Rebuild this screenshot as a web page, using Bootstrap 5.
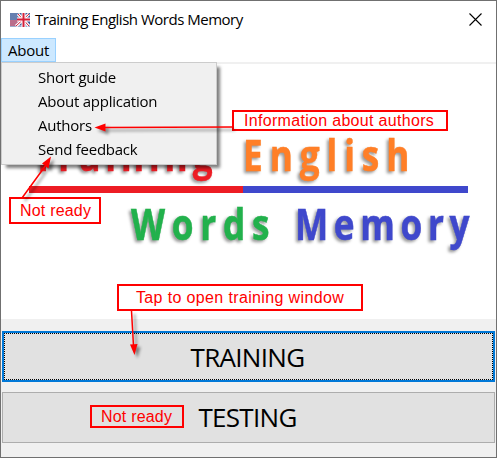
<!DOCTYPE html>
<html lang="en">
<head>
<meta charset="utf-8">
<meta name="viewport" content="width=device-width, initial-scale=1">
<title>Training English Words Memory</title>
<link href="https://cdn.jsdelivr.net/npm/bootstrap@5.3.0/dist/css/bootstrap.min.css" rel="stylesheet">
<style>
body { font-family: "Open Sans", "Noto Sans", sans-serif; font-size: 15px; color: #000; overflow: hidden; }
.app-window { width: 497px; height: 458px; border: 1px solid #707070; background: #f0f0f0; }
.titlebar { height: 37px; padding: 0 14px 0 9px; }
.title-text { margin-left: 5px; letter-spacing: -.49px; line-height: 37px; }
.menubar { height: 24px; }
.menu-open { width: 55px; height: 24px; line-height: 22px; background: #cce8ff; border: 1px solid #99d1ff; padding: 0 0 0 6px; letter-spacing: -.2px; }
.canvas-area { height: 257px; border-top: 2px solid #f0f0f0; }
.popup-menu { left: 0; top: 61px; width: 216px; height: 103px; background: #f0f0f0; border: 1px solid #ccc; box-shadow: 4px 4px 3px -1px rgba(0,0,0,.5); padding: 2px 0 0 36px; }
.popup-menu li { height: 24px; line-height: 24px; letter-spacing: -.24px; }
.win-btn { height: 51px; margin: 0 1px; background: #e1e1e1; border: 1px solid #adadad; font: 26px/49px "Open Sans", sans-serif; letter-spacing: -.7px; color: #000; padding: 0 2px 0 0; border-radius: 0; }
.win-btn.focused { border: 2px solid #0078d7; line-height: 47px; padding: 0; }
.focused .focus-dots { border: 1px dotted #000; height: 47px; padding-right: 2px; }
.button-stack { padding-top: 12px; gap: 10px; }
.note { border: 2px solid #f00; color: #f00; background: #fff; font: 16px "Liberation Sans", Arial, sans-serif; white-space: nowrap; }
.note-authors { left: 231px; top: 109px; width: 216px; height: 21px; line-height: 18px; padding-left: 10px; letter-spacing: .31px; }
.note-feedback { left: 8px; top: 196px; width: 92px; height: 27px; line-height: 23px; padding-left: 9px; letter-spacing: .2px; }
.note-training { left: 116px; top: 283px; width: 246px; height: 27px; line-height: 23px; padding-left: 17px; letter-spacing: .36px; }
.note-testing { left: 89px; top: 404px; width: 94px; height: 23px; line-height: 19px; padding-left: 9px; letter-spacing: .2px; background: #e1e1e1; }
.logo-art { font: bold 43px "Open Sans", "Noto Sans", sans-serif; filter: drop-shadow(-2px 2px 1.5px rgba(0,0,0,.4)); }
.arrows { left: -1px; top: -1px; pointer-events: none; }
.arrows g { filter: drop-shadow(3px 3px 1.5px rgba(0,0,0,.45)); }
</style>
</head>
<body>
<div class="app-window position-relative d-flex flex-column">
  <header class="titlebar bg-white d-flex align-items-center">
    <svg width="20" height="14" viewBox="0 0 20 14">
      <rect width="20" height="14" fill="#3b5998"/>
      <path d="M0 7h10M0 9h10M0 11h10M0 13h20" stroke="#fff" stroke-width="1"/>
      <path d="M0 8h10M0 10h8M0 12h7" stroke="#d6304a"/>
      <path d="M0 0h9v7H0z" fill="#6680b0"/>
      <path d="M6 13L19 1M8 1l11 12" stroke="#fff" stroke-width="3"/>
      <path d="M6 13L19 1M8 1l11 12" stroke="#d51f38" stroke-width="1"/>
      <path d="M13.5 0v14M7 6.500h13" stroke="#fff" stroke-width="4"/>
      <path d="M13.500 0v14M7 6.500h13" stroke="#d51f38" stroke-width="2"/>
    </svg>
    <span class="title-text">Training English Words Memory</span>
    <svg class="ms-auto" width="13" height="13" viewBox="0 0 13 13"><path d="M.5.5l12 12M12.500.5l-12 12" stroke="#000" stroke-width="1.100"/></svg>
  </header>
  <nav class="menubar bg-white d-flex"><span class="menu-open">About</span></nav>
  <main class="canvas-area bg-white">
    <svg width="495" height="255" viewBox="1 63 495 255" role="img">
      <g class="logo-art">
        <text fill="#ed1c24" stroke="#ed1c24" stroke-width=".5" transform="translate(33 170) scale(.82 1)" textLength="219">Training</text>
        <text fill="#ff7f27" stroke="#ff7f27" stroke-width=".5" transform="translate(243 170) scale(.82 1)" textLength="203">English</text>
        <text fill="#22b14c" stroke="#22b14c" stroke-width=".5" transform="translate(131 239) scale(.82 1)" textLength="169">Words</text>
        <text fill="#3f48cc" stroke="#3f48cc" stroke-width=".5" transform="translate(295 239) scale(.82 1)" textLength="213">Memory</text>
      </g>
      <path d="M29 188.500h214" stroke="#ed1c24" stroke-width="7"/>
      <path d="M243 188.500h225" stroke="#3f48cc" stroke-width="7"/>
    </svg>
  </main>
  <section class="button-stack d-grid">
    <button class="btn win-btn focused" type="button"><div class="focus-dots">TRAINING</div></button>
    <button class="btn win-btn" type="button">TESTING</button>
  </section>
  <ul class="popup-menu position-absolute list-unstyled m-0">
    <li>Short guide</li><li>About application</li><li>Authors</li><li>Send feedback</li>
  </ul>
  <div class="note note-authors position-absolute">Information about authors</div>
  <div class="note note-feedback position-absolute">Not ready</div>
  <div class="note note-training position-absolute">Tap to open training window</div>
  <div class="note note-testing position-absolute">Not ready</div>
  <svg class="arrows position-absolute" width="497" height="458" viewBox="0 0 497 458">
    <g stroke="#f00" stroke-width="1.500" fill="#f00">
      <path d="M232 127L104 127.500M22 198L46 165M131.500 311L133.500 346"/>
      <path stroke="none" d="M94.500 127.500l11-4v8zM51 156.500l-2.500 12-6.500-5zM134.500 355l-4.500-10.500 7.500-.5z"/>
    </g>
  </svg>
</div>
<script src="https://cdn.jsdelivr.net/npm/bootstrap@5.3.0/dist/js/bootstrap.bundle.min.js"></script>
</body>
</html>
